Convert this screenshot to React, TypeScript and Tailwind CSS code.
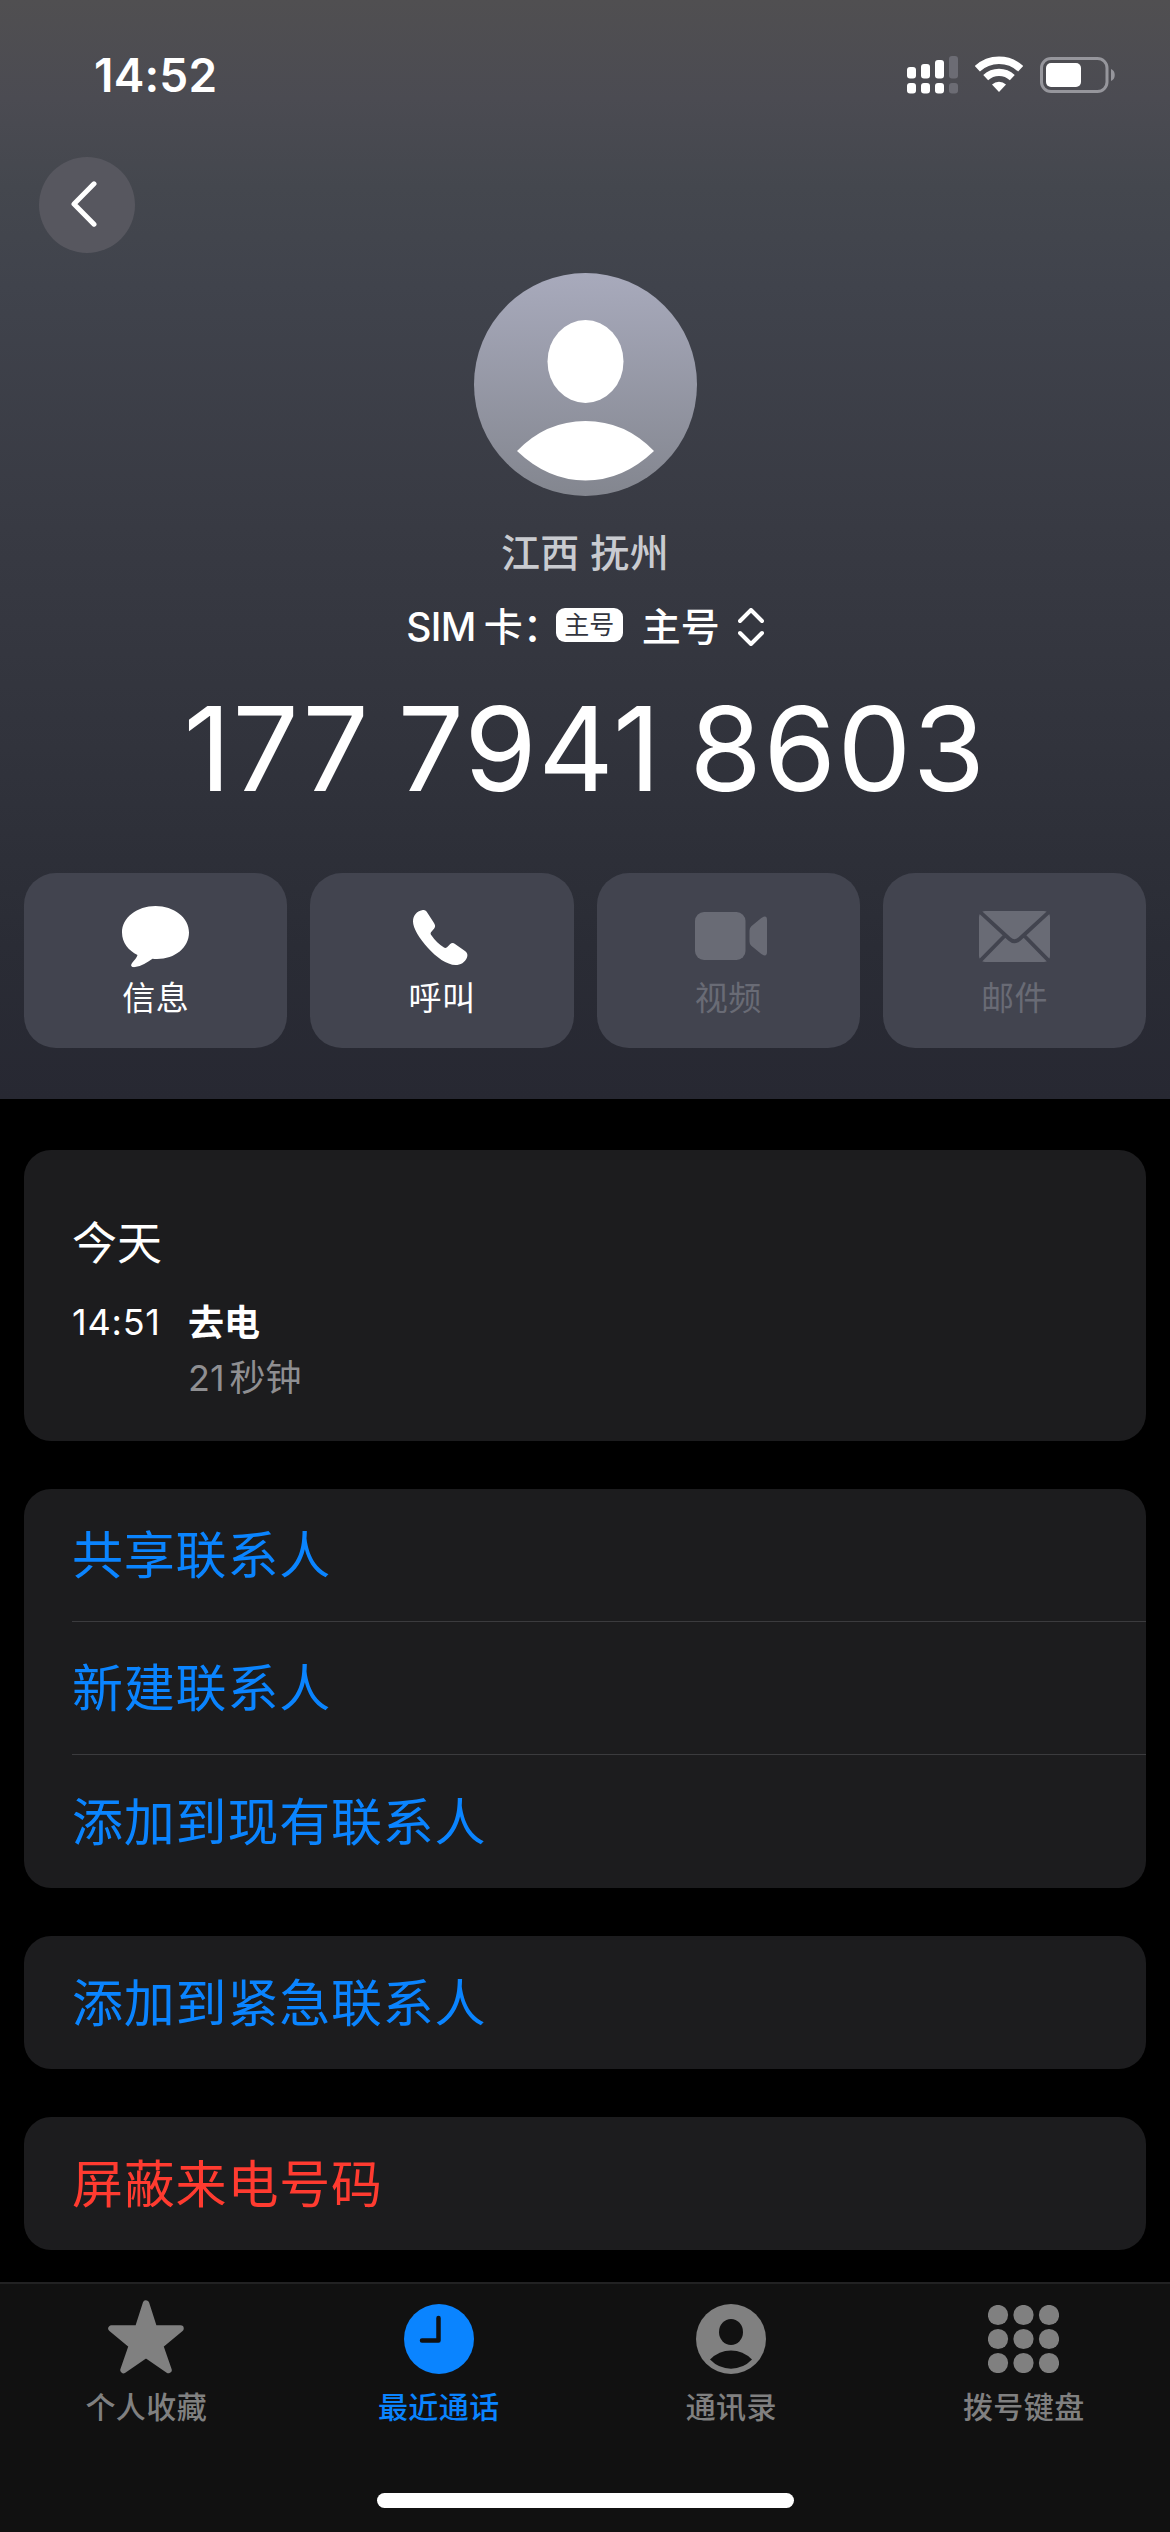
import type { ReactNode } from "react";
import clsx from "clsx";

type Action = {
  label: string;
  icon: ReactNode;
  disabled?: boolean;
};

type Tab = {
  label: string;
  icon: ReactNode;
  active?: boolean;
};

const actions: Action[] = [
  { label: "信息", icon: <MessageIcon /> },
  { label: "呼叫", icon: <PhoneIcon /> },
  { label: "视频", icon: <VideoIcon />, disabled: true },
  { label: "邮件", icon: <MailIcon />, disabled: true },
];

const tabs: Tab[] = [
  { label: "个人收藏", icon: <StarIcon /> },
  { label: "最近通话", icon: <ClockIcon />, active: true },
  { label: "通讯录", icon: <ContactIcon /> },
  { label: "拨号键盘", icon: <KeypadIcon /> },
];

export default function App() {
  return (
    <div className="flex h-[2532px] w-[1170px] flex-col overflow-hidden bg-black font-['Inter','Noto_Sans_CJK_SC',sans-serif] text-white">
      <header className="flex h-[1099px] shrink-0 flex-col bg-[linear-gradient(180deg,#504f51_0%,#4b4b52_9%,#44474e_17%,#40434c_26%,#383a43_48%,#31333c_68%,#2a2c35_86%,#272832_100%)]">
        <StatusBar />
        <div className="mt-2 ml-[39px]">
          <button className="flex h-24 w-24 items-center justify-center rounded-full bg-[#57575f]">
            <svg width="26" height="46" viewBox="0 0 26 46" fill="none" stroke="white" strokeWidth="5" strokeLinecap="round" strokeLinejoin="round" className="-mt-0.5 -ml-1.5">
              <path d="M23 2.8 3 23l20 20.2" />
            </svg>
          </button>
        </div>
        <ContactCard />
        <div className="mt-16 grid grid-cols-4 gap-[23px] px-6">
          {actions.map((action) => (
            <ActionButton key={action.label} {...action} />
          ))}
        </div>
      </header>

      <main className="flex flex-1 flex-col gap-12 px-6 pt-[51px]">
        <CallLog />
        <ListGroup items={["共享联系人", "新建联系人", "添加到现有联系人"]} />
        <ListGroup items={["添加到紧急联系人"]} />
        <ListGroup items={["屏蔽来电号码"]} danger />
      </main>

      <TabBar />
    </div>
  );
}

function StatusBar() {
  return (
    <div className="flex h-[149px] items-center justify-between pr-[54px] pl-[94px]">
      <span className="text-[46px] leading-[46px] font-semibold tracking-[0.2px]">14:52</span>
      <div className="flex items-center gap-[17px]">
        {/* Dual SIM signal */}
        <svg width="51" height="38" viewBox="0 0 51 38" fill="white">
          <rect x="0" y="11" width="9" height="11.5" rx="3" />
          <rect x="14" y="8" width="9" height="14.5" rx="3" />
          <rect x="28" y="4" width="9" height="18.5" rx="3" />
          <rect x="42" y="0" width="9" height="22.5" rx="3" fill="#6c6c74" />
          <rect x="0" y="27" width="9" height="10.5" rx="3" />
          <rect x="14" y="27" width="9" height="10.5" rx="3" />
          <rect x="28" y="27" width="9" height="10.5" rx="3" />
          <rect x="42" y="27" width="9" height="10.5" rx="3" fill="#6c6c74" />
        </svg>
        {/* Wi-Fi */}
        <svg width="48" height="37" viewBox="0 0 48 37" fill="none" stroke="white">
          <path d="M2.3 12.8a31.8 31.8 0 0 1 43.4 0" strokeWidth="7.6" />
          <path d="M10.7 21.7a19.5 19.5 0 0 1 26.6 0" strokeWidth="7.2" />
          <path d="M24 36l-7-7.4a10.3 10.3 0 0 1 14 0z" fill="white" stroke="none" />
        </svg>
        {/* Battery */}
        <svg width="76" height="36" viewBox="0 0 76 36">
          <rect x="1.5" y="1.5" width="65.5" height="33" rx="9.5" fill="none" stroke="#96969c" strokeWidth="3" />
          <rect x="6" y="6" width="35" height="24" rx="5" fill="white" />
          <path d="M71 12c5 1.500 5 10.500 0 12z" fill="#96969c" />
        </svg>
      </div>
    </div>
  );
}

function ContactCard() {
  return (
    <div className="mt-5 flex flex-col items-center">
      <svg width="223" height="223" viewBox="0 0 223 223">
        <defs>
          <linearGradient id="avatar" x1="0" y1="0" x2="0" y2="1">
            <stop offset="0" stopColor="#a8aabc" />
            <stop offset="1" stopColor="#83868f" />
          </linearGradient>
        </defs>
        <circle cx="111.500" cy="111.500" r="111.500" fill="url(#avatar)" />
        <ellipse cx="111.500" cy="88.500" rx="38" ry="41.500" fill="white" />
        <path d="M43 178Q72 148 111.500 148T180 178Q149 207.500 111.500 207.500T43 178z" fill="white" />
      </svg>
      <div className="mt-[33px] h-12 text-[39px] leading-[48px] font-medium tracking-[0.3px] text-[#c9cbd0]">江西 抚州</div>
      <div className="mt-[26px] flex h-12 items-center text-[39px] leading-[48px] font-medium">
        <span className="tracking-[-0.6px]">SIM</span>
        <span className="ml-2">卡：</span>
        <span className="-mt-1 -ml-1.5 flex h-[34px] w-[67px] items-center justify-center rounded-[9px] bg-white text-[25px] leading-[34px] font-normal text-[#33353e]">主号</span>
        <span className="ml-[19px]">主号</span>
        <svg width="26" height="38" viewBox="0 0 26 38" fill="none" stroke="white" strokeWidth="4" strokeLinecap="round" strokeLinejoin="round" className="ml-[18px]">
          <path d="M2 13 13 2l11 11M2 25l11 11 11-11" />
        </svg>
      </div>
      <div className="mt-[38px] h-[120px] text-[117px] leading-[120px] tracking-[1.5px] [word-spacing:-7px] whitespace-nowrap">177 7941 8603</div>
    </div>
  );
}

function ActionButton({ label, icon, disabled }: Action) {
  return (
    <button
      className={clsx(
        "flex h-[175px] flex-col items-center rounded-[32px] bg-[#42444f] pt-[30px]",
        disabled ? "text-[#696b75]" : "text-white"
      )}
    >
      <span className="flex h-[68px] items-center">{icon}</span>
      <span className="mt-[7px] h-10 text-[33px] leading-10 tracking-[0.5px]">{label}</span>
    </button>
  );
}

function CallLog() {
  return (
    <section className="h-[291px] rounded-[27px] bg-[#1c1c1e] px-12 pt-[66px]">
      <h2 className="h-14 text-[45px] leading-[56px]">今天</h2>
      <div className="mt-[22px] flex gap-7 text-[36px] leading-[56px]">
        <span className="w-[88px] tracking-[0.8px] whitespace-nowrap">14:51</span>
        <div className="flex flex-col">
          <span className="h-14 pt-px font-bold">去电</span>
          <span className="h-14 text-[#8f8f92]">21<span className="ml-[5px]">秒钟</span></span>
        </div>
      </div>
    </section>
  );
}

type ListGroupProps = {
  items: string[];
  danger?: boolean;
};

function ListGroup({ items, danger }: ListGroupProps) {
  return (
    <section className={clsx("rounded-[27px] bg-[#1c1c1e] pl-12", danger ? "text-[#ff3b30]" : "text-[#0a84ff]")}>
      {items.map((item, i) => (
        <div
          key={item}
          className={clsx("flex h-[133px] items-center pt-[3px] text-[51px] tracking-[0.8px]", i < items.length - 1 && "border-b border-[#3b3b3e]")}
        >
          {item}
        </div>
      ))}
    </section>
  );
}

function TabBar() {
  return (
    <nav className="flex h-[250px] shrink-0 flex-col items-center border-t-2 border-[#222223] bg-[#111111]">
      <div className="grid w-full grid-cols-4">
        {tabs.map(({ label, icon, active }) => (
          <div key={label} className={clsx("flex flex-col items-center pt-[15px]", active ? "text-[#0a84ff]" : "text-[#808080]")}>
            <span className="flex h-20 items-center">{icon}</span>
            <span className="mt-2.5 h-9 text-[30px] leading-9 font-medium tracking-[0.4px]">{label}</span>
          </div>
        ))}
      </div>
      {/* Home indicator */}
      <div className="mt-[68px] h-[15px] w-[417px] rounded-full bg-white" />
    </nav>
  );
}

function MessageIcon() {
  return (
    <svg width="67" height="62" viewBox="0 0 67 62" fill="currentColor">
      <path d="M33.500 0C52 0 67 11.500 67 26.500S53 53 35 53q-2.500 0-4.500-.3C25 56.500 19.500 60 13 61.100c-2.300.4-4.800-.6-3.500-3 1.500-2.800 4.700-4.600 6-9C6.500 44.500 0 37 0 26.500 0 11.500 15 0 33.500 0z" />
    </svg>
  );
}

function PhoneIcon() {
  return (
    <svg width="55" height="55" viewBox="0 0 55 55" fill="currentColor" className="-ml-0.5">
      <path d="M9 .3C12-.4 13.200 1 14.200 2.500L21 13c1.500 2.300 1.400 3.900.2 5.400L18.200 22c-.8 1-.8 2 0 3 4 5.800 7.800 9.300 12.800 12.600 1 .7 2 .5 3-.4l3-3c1.500-1.400 3.400-1.400 5-.3l10 7.200c2.500 1.800 2.800 4 2 6.400-2 5-6.500 7.500-11.500 7.500-8.500 0-19.500-8-27.500-17C6 28 0 18 0 11.500 0 5.500 4 1.200 9 .3z" />
    </svg>
  );
}

function VideoIcon() {
  return (
    <svg width="72" height="48" viewBox="0 0 72 48" fill="currentColor" className="-mt-0.5 ml-1.5">
      <rect width="50.500" height="48" rx="9" />
      <path d="M54.500 18.500q0-2.500 1.800-4.200l10-8.400Q72 2.500 72 8v32q0 5.500-5.700 2.100l-10-8.400q-1.800-1.700-1.800-4.200z" />
    </svg>
  );
}

function MailIcon() {
  return (
    <svg width="71" height="51" viewBox="0 0 71 51" className="-mt-0.5">
      <rect width="71" height="51" rx="6" fill="currentColor" />
      <path d="M0 0l30.500 28q5 4.500 10 0L71 0M0 51l26.500-27M71 51 44.500 24" fill="none" stroke="#42444f" strokeWidth="3.800" />
    </svg>
  );
}

function StarIcon() {
  return (
    <svg width="76" height="74" viewBox="0 0 76 74" fill="currentColor" stroke="currentColor" strokeWidth="6.500" strokeLinejoin="round" className="-mt-1">
      <path d="M38 3.500l8 25h26.500L52 45.500 60.500 70 38 54.500 15.500 70 24 45.500 3.500 28.500H30z" />
    </svg>
  );
}

function ClockIcon() {
  return (
    <svg width="70" height="70" viewBox="0 0 70 70">
      <circle cx="35" cy="35" r="35" fill="currentColor" />
      <path d="M34.500 14v22.500H18" fill="none" stroke="#111111" strokeWidth="4.500" strokeLinecap="round" strokeLinejoin="round" />
    </svg>
  );
}

function ContactIcon() {
  return (
    <svg width="70" height="70" viewBox="0 0 70 70">
      <circle cx="35" cy="35" r="35" fill="currentColor" />
      <ellipse cx="35" cy="28" rx="12" ry="13" fill="#111111" />
      <path d="M14 55.500Q23 46.500 35 46.500T56 55.500Q47 64.700 35 64.700T14 55.500z" fill="#111111" />
    </svg>
  );
}

function KeypadIcon() {
  return (
    <svg width="71" height="68" viewBox="0 0 71 68" fill="currentColor">
      {[10, 34, 58].map((cy) =>
        [10, 35.5, 61].map((cx) => <circle key={`${cx}-${cy}`} cx={cx} cy={cy} r="10.100" />)
      )}
    </svg>
  );
}
